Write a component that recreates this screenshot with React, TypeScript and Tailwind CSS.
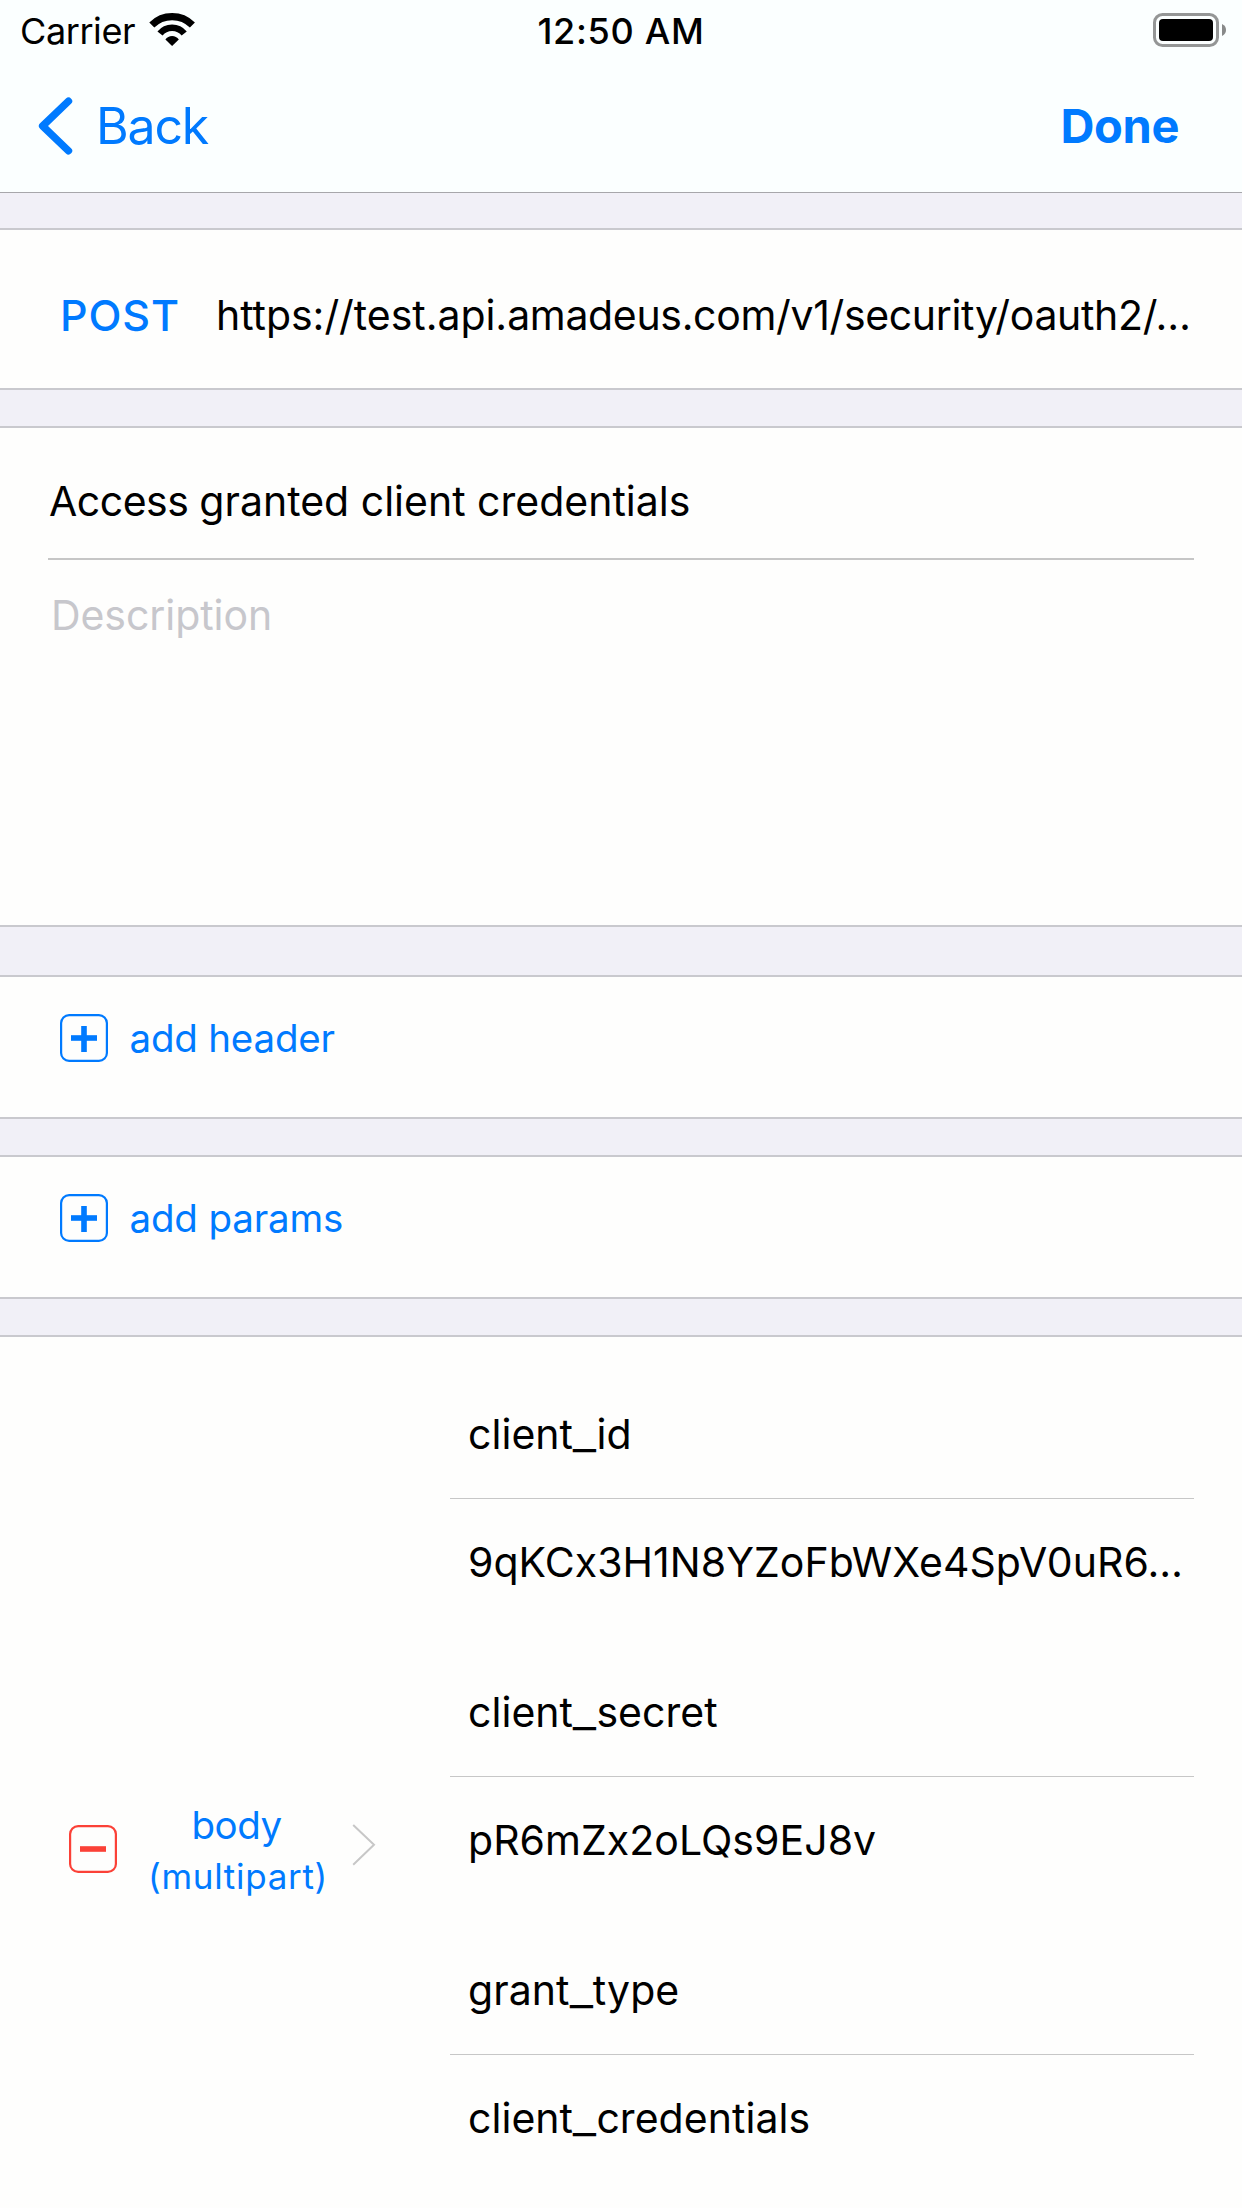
import type { ReactNode } from "react";

function WifiIcon() {
  return (
    <svg width="46" height="34" viewBox="0 0 46 34" className="shrink-0">
      <path d="M2.8 12 A28.7 28.7 0 0 1 43.4 12" fill="none" stroke="#000" strokeWidth="7.1" />
      <path d="M11 20.5 A15.5 15.5 0 0 1 35.2 20.5" fill="none" stroke="#000" strokeWidth="6.6" />
      <path d="M23.1 33 L16.4 26.6 A8.1 8.1 0 0 1 29.8 26.6 Z" fill="#000" />
    </svg>
  );
}

function BatteryIcon() {
  return (
    <svg width="73" height="34" viewBox="0 0 73 34" className="shrink-0">
      <rect x="1.5" y="1.5" width="63" height="31" rx="8" fill="none" stroke="#949696" strokeWidth="3" />
      <rect x="6" y="6" width="54" height="22" rx="4" fill="#000" />
      <path d="M69 11 C72 12.4 73 14.6 73 17 C73 19.4 72 21.6 69 23 Z" fill="#888a8a" />
    </svg>
  );
}

function BoxIcon({ kind }: { kind: "plus" | "minus" }) {
  const color = kind === "plus" ? "#007aff" : "#fb4137";
  return (
    <svg width="48" height="48" viewBox="0 0 48 48" className="shrink-0" fill={color}>
      <rect x="1.1" y="1.1" width="45.8" height="45.8" rx="8" fill="none" stroke={color} strokeWidth="2.2" />
      <rect x="11" y="21.2" width="26" height="5.6" />
      {kind === "plus" && <rect x="21.2" y="12" width="5.6" height="26" />}
    </svg>
  );
}

function Section({ className = "", children }: { className?: string; children: ReactNode }) {
  return <section className={`shrink-0 border-y-2 border-[#c9c9ce] bg-[#fefefd] ${className}`}>{children}</section>;
}

function AddRow({ label, tracking }: { label: string; tracking: string }) {
  return (
    <Section className="flex h-[144px] pt-[37px] pl-[60px]">
      <BoxIcon kind="plus" />
      <span className={`ml-[21.5px] text-[38.5px] leading-[48px] text-[#007aff] ${tracking}`}>{label}</span>
    </Section>
  );
}

function KeyName({ name }: { name: string }) {
  const [head, tail] = name.split("_");
  return (
    <>
      {head}
      <span className="mx-[2.3px] inline-block scale-x-125">_</span>
      {tail}
    </>
  );
}

const fields = [
  { name: "client_id", value: "9qKCx3H1N8YZoFbWXe4SpV0uR6…" },
  { name: "client_secret", value: "pR6mZx2oLQs9EJ8v" },
  { name: "grant_type", value: "client_credentials" },
];

export default function App() {
  return (
    <div className="flex h-[2208px] w-[1242px] flex-col overflow-hidden bg-[#f1f0f7] font-['Inter',sans-serif] text-black">
      <header className="h-[193px] shrink-0 border-b border-[#a7a7ab] bg-[#fbffff]">
        <div className="grid h-[96px] grid-cols-3 pt-[9px] text-[36px] leading-[44px]">
          <div className="flex pl-[20px]">
            <span className="w-[129px] tracking-[-0.41px]">Carrier</span>
            <span className="pt-[4px]"><WifiIcon /></span>
          </div>
          <div className="text-center font-medium tracking-[0.69px]">12:50 AM</div>
          <div className="flex justify-end pt-[4px] pr-[16px]"><BatteryIcon /></div>
        </div>
        <div className="flex h-[60px] justify-between pr-[63px] pl-[38px] leading-[60px] text-[#007aff]">
          <button className="flex">
            <svg width="58" height="60" viewBox="0 0 58 60">
              <path d="M30.5 5.2 L4.6 30 L30.5 54.8" fill="none" stroke="#007aff" strokeWidth="7.4" strokeLinecap="round" strokeLinejoin="round" />
            </svg>
            <span className="text-[50px] tracking-[-1.2px]">Back</span>
          </button>
          <button className="text-[47px] font-bold tracking-[-0.4px]">Done</button>
        </div>
      </header>

      <Section className="mt-[35px] flex h-[162px] pt-[55px] pl-[60px] leading-[60px]">
        <span className="w-[156px] shrink-0 text-[43px] font-medium tracking-[0.9px] text-[#007aff]">POST</span>
        <span className="text-[41px] tracking-[-0.34px] whitespace-nowrap">
          <span className="tracking-[-0.04px]">https://test.api.</span>amadeus.com/v1/security/oauth2/…
        </span>
      </Section>

      <Section className="mt-9 h-[501px] px-12 pt-[43px] text-[41px] leading-[60px]">
        <div className="border-b-2 border-[#c6c6c6] pb-[27px] pl-[1px]">
          <span className="tracking-[-0.5px]">Access </span>granted client credentials
        </div>
        <div className="pt-[25px] pl-[3px] tracking-[-0.06px] text-[#c7c7cc]">Description</div>
      </Section>

      <div className="mt-12 flex shrink-0 flex-col gap-9">
        <AddRow label="add header" tracking="tracking-[-0.2px]" />
        <AddRow label="add params" tracking="tracking-[-0.17px]" />
      </div>

      <Section className="mt-9 flex h-[900px]">
        <div className="mt-[463px] flex h-[100px] w-[450px] shrink-0 pl-[69px]">
          <span className="pt-[25px]"><BoxIcon kind="minus" /></span>
          <div className="ml-[28px] w-[186px] text-center text-[#007aff]">
            <div className="pr-[3px] text-[38.5px] leading-[50px] tracking-[-0.5px]">body</div>
            <div className="pt-[1px] text-[35px] leading-[50px] tracking-[0.7px]">(multipart)</div>
          </div>
          <svg width="24" height="42" viewBox="0 0 24 42" className="mt-[24px] ml-[21px]">
            <path d="M1.2 1 L22 20.8 L1.2 40.8" fill="none" stroke="#c7c7c7" strokeWidth="2" />
          </svg>
        </div>
        <div className="flex w-[744px] flex-col gap-[90px] pt-[67px] text-[41px] leading-[60px] tracking-[0.04px] whitespace-nowrap">
          {fields.map((f) => (
            <div key={f.name}>
              <div className="border-b border-[#c7c7c7] pb-[34px] pl-[18px]"><KeyName name={f.name} /></div>
              <div className="pt-[33px] pl-[18px]">
                {f.value.includes("_") ? <KeyName name={f.value} /> : f.value}
              </div>
            </div>
          ))}
        </div>
      </Section>
    </div>
  );
}
